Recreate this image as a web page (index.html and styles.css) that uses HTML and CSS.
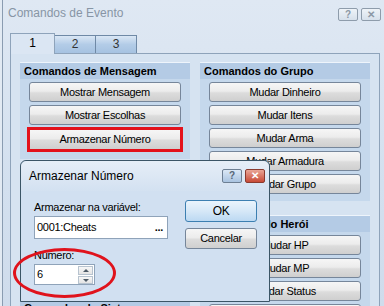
FILE: index.html
```html
<!DOCTYPE html>
<html lang="pt">
<head>
    <meta charset="UTF-8">
    <title>Comandos de Evento</title>
    <link rel="stylesheet" href="styles.css">
</head>
<body>
    <div class="window">
        <div class="titlebar">
            <span class="title">Comandos de Evento</span>
            <div class="caption-btns">
                <span class="cbtn">?</span>
                <span class="cbtn">&#x2715;</span>
            </div>
        </div>

        <div class="tabs">
            <div class="tab active">1</div>
            <div class="tab">2</div>
            <div class="tab">3</div>
        </div>

        <div class="panel">
            <div class="col">
                <div class="group">
                    <div class="ghead">Comandos de Mensagem</div>
                    <div class="btn">Mostrar Mensagem</div>
                    <div class="btn">Mostrar Escolhas</div>
                    <div class="btn marked">Armazenar Número</div>
                </div>
                <div class="group tight">
                    <div class="ghead">Comandos de Jogo</div>
                    <div class="btn">Switches</div>
                    <div class="btn">Variáveis</div>
                    <div class="btn">Cronômetro</div>
                    <div class="btn">Esperar</div>
                </div>
                <div class="group">
                    <div class="ghead">Comandos do Sistema</div>
                    <div class="btn">Mudar Música</div>
                </div>
            </div>
            <div class="col">
                <div class="group">
                    <div class="ghead">Comandos do Grupo</div>
                    <div class="btn">Mudar Dinheiro</div>
                    <div class="btn">Mudar Itens</div>
                    <div class="btn">Mudar Arma</div>
                    <div class="btn">Mudar Armadura</div>
                    <div class="btn">Mudar Grupo</div>
                </div>
                <div class="group">
                    <div class="ghead">Comandos do Herói</div>
                    <div class="btn">Mudar HP</div>
                    <div class="btn">Mudar MP</div>
                    <div class="btn">Mudar Status</div>
                    <div class="btn">Mudar Nível</div>
                </div>
            </div>
        </div>
    </div>

    <div class="dialog">
        <div class="dtitle">
            <span>Armazenar Número</span>
            <div class="dcaption">
                <span class="dbtn help">?</span>
                <span class="dbtn close">&#x2715;</span>
            </div>
        </div>
        <div class="dbody">
            <div class="fields">
                <div class="label">Armazenar na variável:</div>
                <div class="input">
                    <span>0001:Cheats</span>
                    <span class="dots">...</span>
                </div>
                <div class="label second">Número:</div>
                <div class="spin">
                    <span>6</span>
                    <div class="arrows">
                        <span class="arrow up"></span>
                        <span class="arrow down"></span>
                    </div>
                </div>
            </div>
            <div class="actions">
                <div class="btn ok">OK</div>
                <div class="btn">Cancelar</div>
            </div>
        </div>
    </div>

    <div class="ellipse"></div>
</body>
</html>
```

FILE: styles.css
```css
body {
    margin: 0;
    width: 384px;
    height: 306px;
    overflow: hidden;
    position: relative;
    font-family: "Liberation Sans", Arial, sans-serif;
    font-size: 11px;
    letter-spacing: -0.3px;
    color: #000;
    background: #e2eaf3;
}
.window {
    height: 306px;
    margin-left: 2px;
    border-left: 1px solid #8a9cb1;
    background: linear-gradient(#dfe8f3, #d3e0ef 60%, #cfdcec);
}
.titlebar {
    display: flex;
    height: 33px;
}
.title {
    margin: 5px 0 0 5px;
    font-size: 12px;
    line-height: 16px;
    color: #8795a5;
    letter-spacing: 0;
}
.caption-btns {
    display: flex;
    gap: 3px;
    margin: 8px 3px 0 auto;
}
.cbtn {
    width: 18px;
    height: 11px;
    border: 1px solid #8e9cab;
    border-radius: 2px;
    background: linear-gradient(#eef3f8, #d6e0eb);
    color: #8c98a6;
    font-size: 10px;
    font-weight: bold;
    line-height: 11px;
    text-align: center;
}
.tabs {
    display: flex;
    align-items: flex-end;
    height: 20px;
    padding-left: 7px;
}
.tab {
    width: 40px;
    height: 17px;
    margin-left: -1px;
    border: 1px solid #6f89a6;
    border-bottom: none;
    background: linear-gradient(#dae7f5, #b3cce7 50%, #a6c2e1);
    color: #333;
    font-size: 12px;
    line-height: 17px;
    text-align: center;
}
.tab.active {
    width: 43px;
    height: 20px;
    margin-left: 0;
    margin-bottom: -1px;
    position: relative;
    z-index: 1;
    border-color: #8ea3ba;
    background: #dbe6f3;
    line-height: 19px;
    color: #000;
}
.panel {
    display: grid;
    grid-template-columns: 170px 170px;
    column-gap: 10px;
    align-items: start;
    width: 350px;
    height: 260px;
    margin-left: 7px;
    padding: 8px 9px 0;
    border: 1px solid #8ea3ba;
    background: #d6e3f1;
}
.col {
    display: flex;
    flex-direction: column;
    gap: 14px;
}
.group {
    padding-bottom: 7px;
    border-top: 1px solid #eef4fb;
    background: #c5d8ec;
}
.group.tight {
    padding-bottom: 3px;
}
.ghead {
    height: 16px;
    padding-left: 4px;
    background: #b4cbe5;
    font-weight: bold;
    font-size: 11px;
    line-height: 16px;
    letter-spacing: 0;
}
.btn {
    height: 18px;
    margin: 3px 9px 0;
    border: 1px solid #76869a;
    border-radius: 3px;
    background: linear-gradient(#f6f6f6, #ececec 45%, #dcdcdc 55%, #cfcfcf);
    line-height: 18px;
    text-align: center;
}
.btn.marked {
    height: 19px;
    margin: 2px 7px 0;
    border: 3px solid #e3121c;
    border-radius: 0;
    line-height: 19px;
}
.dialog {
    position: absolute;
    left: 20px;
    top: 160px;
    width: 248px;
    height: 140px;
    border: 1px solid #3b5566;
    border-radius: 6px 6px 0 0;
    background: #d1e0f1;
}
.dtitle {
    display: flex;
    align-items: flex-start;
    height: 30px;
    padding-left: 8px;
    border-radius: 6px 6px 0 0;
    background: linear-gradient(#e6eef7, #d3e1f1);
    font-size: 12px;
    line-height: 30px;
    letter-spacing: 0;
}
.dcaption {
    display: flex;
    gap: 3px;
    margin: 8px 4px 0 auto;
}
.dbtn {
    width: 18px;
    height: 12px;
    border: 1px solid #6d7f93;
    border-radius: 2px;
    font-size: 10px;
    font-weight: bold;
    line-height: 12px;
    text-align: center;
}
.dbtn.help {
    background: linear-gradient(#dbe8f6, #a9c3e0);
    color: #566677;
}
.dbtn.close {
    border-color: #8a3a2e;
    background: linear-gradient(#e9a596, #c84a36);
    color: #fff;
}
.dbody {
    display: flex;
    gap: 17px;
    padding: 9px 0 0 13px;
}
.fields {
    display: flex;
    flex-direction: column;
}
.label {
    height: 14px;
    line-height: 14px;
}
.label.second {
    margin-top: 9px;
}
.input {
    display: flex;
    justify-content: space-between;
    width: 126px;
    height: 21px;
    margin-top: 2px;
    padding: 0 4px 0 2px;
    border: 1px solid #8fa3b9;
    background: #fff;
    line-height: 21px;
}
.dots {
    font-weight: bold;
}
.spin {
    display: flex;
    justify-content: space-between;
    width: 56px;
    height: 19px;
    margin-top: 2px;
    padding: 0 1px 0 2px;
    border: 1px solid #8fa3b9;
    background: #fff;
    line-height: 19px;
}
.arrows {
    display: flex;
    flex-direction: column;
    gap: 1px;
    padding-top: 1px;
}
.arrow {
    position: relative;
    width: 13px;
    height: 7px;
    border: 1px solid #b7c3cf;
    background: linear-gradient(#f7f7f7, #e4e4e4);
}
.arrow::after {
    content: "";
    position: absolute;
    left: 4px;
    border-left: 3px solid transparent;
    border-right: 3px solid transparent;
}
.arrow.up::after {
    top: 2px;
    border-bottom: 3px solid #4d5a66;
}
.arrow.down::after {
    top: 2px;
    border-top: 3px solid #4d5a66;
}
.actions {
    display: flex;
    flex-direction: column;
    gap: 6px;
    width: 72px;
}
.actions .btn {
    margin: 0;
    height: 19px;
    line-height: 19px;
}
.actions .btn.ok {
    height: 20px;
    border-color: #3c7fb1;
    background: linear-gradient(#eaf4fc, #d6e8f7 50%, #bcd9f2);
    font-size: 12px;
    line-height: 20px;
}
.ellipse {
    position: absolute;
    left: 13px;
    top: 248px;
    width: 97px;
    height: 44px;
    border: 3px solid #e0131c;
    border-radius: 50%;
}
```
